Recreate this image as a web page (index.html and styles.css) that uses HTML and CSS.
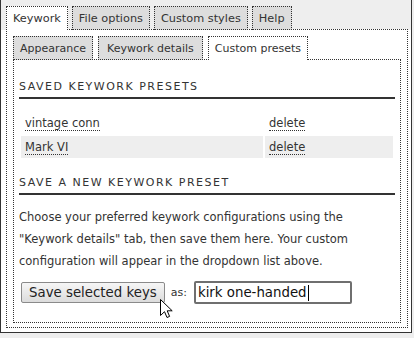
FILE: index.html
```html
<!DOCTYPE html>
<html lang="en">
<head>
    <meta charset="UTF-8">
    <title>Custom presets</title>
    <link rel="stylesheet" href="styles.css">
</head>
<body>
    <div class="frame">
        <ul class="tabs">
            <li class="tab active">Keywork</li>
            <li class="tab">File options</li>
            <li class="tab">Custom styles</li>
            <li class="tab">Help</li>
        </ul>
        <div class="panel outer-panel">
            <ul class="tabs inner-tabs">
                <li class="tab">Appearance</li>
                <li class="tab wide">Keywork details</li>
                <li class="tab active">Custom presets</li>
            </ul>
            <div class="panel inner-panel">
                <h3>Saved keywork presets</h3>
                <table class="presets">
                    <tr>
                        <td class="name"><a href="#">vintage conn</a></td>
                        <td><a href="#">delete</a></td>
                    </tr>
                    <tr class="alt">
                        <td class="name"><a href="#">Mark VI</a></td>
                        <td><a href="#">delete</a></td>
                    </tr>
                </table>

                <h3 class="second">Save a new keywork preset</h3>
                <p>Choose your preferred keywork configurations using the "Keywork details" tab, then save them here. Your custom configuration will appear in the dropdown list above.</p>

                <div class="save-row">
                    <button class="save-btn">Save selected keys</button>
                    <span class="as">as:</span>
                    <span class="field">kirk one-handed<span class="caret"></span></span>
                </div>
            </div>
        </div>
    </div>

    <!-- mouse pointer -->
    <svg class="pointer" width="13" height="20" viewBox="0 0 13 20">
        <path d="M0.5 0.5 L0.5 16.5 L4.5 12.7 L7 18.5 L9.6 17.4 L7.2 11.8 L12.2 11.8 Z" fill="#fff" stroke="#000" stroke-width="1" stroke-linejoin="miter"/>
    </svg>
</body>
</html>
```

FILE: styles.css
```css
body {
    margin: 0;
    background: #eee;
    font-family: "DejaVu Sans", Verdana, sans-serif;
    font-size: 11.5px;
    color: #333;
}
.frame {
    width: 410px;
    border: 1px solid #333;
    border-top: none;
    background: #fff;
}
.tabs {
    display: flex;
    gap: 4px;
    margin: 0 0 -1px 0;
    padding: 6px 0 0 5px;
    list-style: none;
    background: #eee;
}
.tab {
    height: 22px;
    line-height: 23px;
    padding: 0 6px;
    border: 1px dotted #333;
    background: #ddd;
    font-size: 11.3px;
    white-space: nowrap;
}
.tab.active {
    height: 23px;
    border-bottom: none;
    background: #fff;
}
.panel {
    border: 1px dotted #333;
    background: #fff;
}
.outer-panel {
    margin: 0 3px 4px 5px;
    padding: 0 6px 4px 6px;
}
.inner-tabs {
    padding: 6px 0 0 0;
    background: #fff;
}
.inner-tabs .tab {
    font-size: 11px;
}
.inner-tabs .tab + .tab {
    margin-left: 1px;
}
.inner-tabs .tab.wide {
    padding: 0 8px;
}
.inner-panel {
    padding: 20px 5px 18px 5px;
}
h3 {
    margin: 0;
    padding-bottom: 3px;
    border-bottom: 2px solid #333;
    font-size: 11px;
    line-height: 14px;
    font-weight: normal;
    letter-spacing: 1.5px;
    text-transform: uppercase;
}
h3.second {
    margin-top: 16px;
}
.presets {
    width: 100%;
    margin-top: 11px;
    border-spacing: 2px;
}
.presets td {
    height: 22px;
    padding: 0 4px;
}
.presets td.name {
    width: 234px;
}
.presets tr.alt td {
    background: #eee;
}
.presets a {
    color: #333;
    text-decoration: none;
    border-bottom: 1px dotted #333;
}
p {
    margin: 11px 0 0 0;
    line-height: 22px;
}
.save-row {
    display: flex;
    align-items: center;
    margin-top: 9px;
    padding-left: 2px;
}
.save-btn {
    height: 21px;
    padding: 0 7px;
    border: 1px solid #8a8a8a;
    border-radius: 2px;
    background: linear-gradient(#f6f6f6, #dcdcdc);
    font-family: "DejaVu Sans", Verdana, sans-serif;
    font-size: 13.33px;
    color: #222;
}
.as {
    margin: 0 7px 0 6px;
    font-size: 11px;
}
.field {
    display: flex;
    align-items: center;
    width: 150px;
    height: 19px;
    padding: 0 2px;
    border: 2px solid #6f6f6f;
    border-radius: 2px;
    font-size: 13.33px;
    color: #111;
}
.caret {
    width: 1px;
    height: 16px;
    margin-left: 1px;
    background: #000;
}
.pointer {
    position: absolute;
    left: 160px;
    top: 299px;
}
```
